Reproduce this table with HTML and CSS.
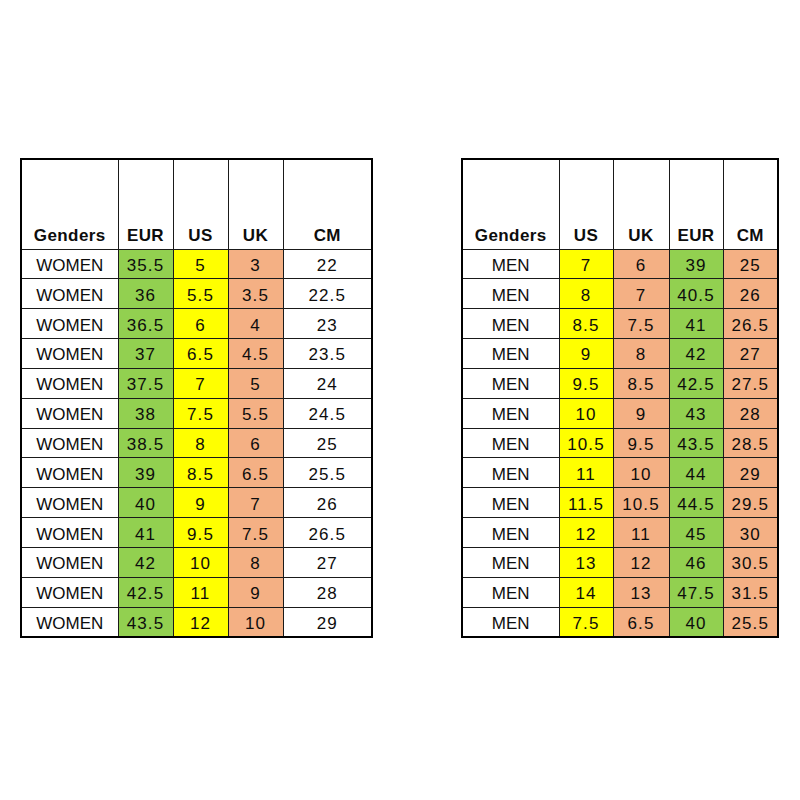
FILE: index.html
```html
<!DOCTYPE html>
<html>
<head>
<meta charset="utf-8">
<link rel="stylesheet" href="styles.css">
</head>
<body>
<div class="page">
  <table class="chart chart-women">
    <colgroup><col class="c-gender"><col class="c-eur"><col class="c-us"><col class="c-uk"><col class="c-cm"></colgroup>
    <thead>
      <tr><th>Genders</th><th>EUR</th><th>US</th><th>UK</th><th>CM</th></tr>
    </thead>
    <tbody>
      <tr><td>WOMEN</td><td class="g num">35.5</td><td class="y num">5</td><td class="o num">3</td><td class="num">22</td></tr>
      <tr><td>WOMEN</td><td class="g num">36</td><td class="y num">5.5</td><td class="o num">3.5</td><td class="num">22.5</td></tr>
      <tr><td>WOMEN</td><td class="g num">36.5</td><td class="y num">6</td><td class="o num">4</td><td class="num">23</td></tr>
      <tr><td>WOMEN</td><td class="g num">37</td><td class="y num">6.5</td><td class="o num">4.5</td><td class="num">23.5</td></tr>
      <tr><td>WOMEN</td><td class="g num">37.5</td><td class="y num">7</td><td class="o num">5</td><td class="num">24</td></tr>
      <tr><td>WOMEN</td><td class="g num">38</td><td class="y num">7.5</td><td class="o num">5.5</td><td class="num">24.5</td></tr>
      <tr><td>WOMEN</td><td class="g num">38.5</td><td class="y num">8</td><td class="o num">6</td><td class="num">25</td></tr>
      <tr><td>WOMEN</td><td class="g num">39</td><td class="y num">8.5</td><td class="o num">6.5</td><td class="num">25.5</td></tr>
      <tr><td>WOMEN</td><td class="g num">40</td><td class="y num">9</td><td class="o num">7</td><td class="num">26</td></tr>
      <tr><td>WOMEN</td><td class="g num">41</td><td class="y num">9.5</td><td class="o num">7.5</td><td class="num">26.5</td></tr>
      <tr><td>WOMEN</td><td class="g num">42</td><td class="y num">10</td><td class="o num">8</td><td class="num">27</td></tr>
      <tr><td>WOMEN</td><td class="g num">42.5</td><td class="y num">11</td><td class="o num">9</td><td class="num">28</td></tr>
      <tr><td>WOMEN</td><td class="g num">43.5</td><td class="y num">12</td><td class="o num">10</td><td class="num">29</td></tr>
    </tbody>
  </table>

  <table class="chart chart-men">
    <colgroup><col class="c-gender"><col class="c-us2"><col class="c-uk2"><col class="c-eur2"><col class="c-cm2"></colgroup>
    <thead>
      <tr><th>Genders</th><th>US</th><th>UK</th><th>EUR</th><th>CM</th></tr>
    </thead>
    <tbody>
      <tr><td>MEN</td><td class="y num">7</td><td class="o num">6</td><td class="g num">39</td><td class="o num">25</td></tr>
      <tr><td>MEN</td><td class="y num">8</td><td class="o num">7</td><td class="g num">40.5</td><td class="o num">26</td></tr>
      <tr><td>MEN</td><td class="y num">8.5</td><td class="o num">7.5</td><td class="g num">41</td><td class="o num">26.5</td></tr>
      <tr><td>MEN</td><td class="y num">9</td><td class="o num">8</td><td class="g num">42</td><td class="o num">27</td></tr>
      <tr><td>MEN</td><td class="y num">9.5</td><td class="o num">8.5</td><td class="g num">42.5</td><td class="o num">27.5</td></tr>
      <tr><td>MEN</td><td class="y num">10</td><td class="o num">9</td><td class="g num">43</td><td class="o num">28</td></tr>
      <tr><td>MEN</td><td class="y num">10.5</td><td class="o num">9.5</td><td class="g num">43.5</td><td class="o num">28.5</td></tr>
      <tr><td>MEN</td><td class="y num">11</td><td class="o num">10</td><td class="g num">44</td><td class="o num">29</td></tr>
      <tr><td>MEN</td><td class="y num">11.5</td><td class="o num">10.5</td><td class="g num">44.5</td><td class="o num">29.5</td></tr>
      <tr><td>MEN</td><td class="y num">12</td><td class="o num">11</td><td class="g num">45</td><td class="o num">30</td></tr>
      <tr><td>MEN</td><td class="y num">13</td><td class="o num">12</td><td class="g num">46</td><td class="o num">30.5</td></tr>
      <tr><td>MEN</td><td class="y num">14</td><td class="o num">13</td><td class="g num">47.5</td><td class="o num">31.5</td></tr>
      <tr><td>MEN</td><td class="y num">7.5</td><td class="o num">6.5</td><td class="g num">40</td><td class="o num">25.5</td></tr>
    </tbody>
  </table>
</div>
</body>
</html>
```

FILE: styles.css
```css
html, body {
  margin: 0;
  padding: 0;
  background: #ffffff;
}

.page {
  display: flex;
  align-items: flex-start;
  gap: 88px;
  padding: 158px 0 0 20px;
  font-family: "Liberation Sans", Arial, sans-serif;
  color: #0d0d0d;
}

.chart {
  border-collapse: collapse;
  table-layout: fixed;
  border: 2px solid #000;
}

.chart-women { width: 351px; }
.chart-men { width: 316px; }

.c-gender { width: 97px; }
.c-eur, .c-us, .c-uk { width: 55px; }
.c-cm { width: 89px; }
.c-us2 { width: 54px; }
.c-uk2 { width: 56px; }
.c-eur2 { width: 54px; }
.c-cm2 { width: 55px; }

.chart th,
.chart td {
  border: 1px solid #1a1a1a;
  padding: 0;
  text-align: center;
  font-size: 17px;
  white-space: nowrap;
}

.chart thead tr { height: 90px; }

.chart th {
  vertical-align: bottom;
  font-weight: bold;
  padding-bottom: 3px;
  letter-spacing: 0.4px;
}

.chart tbody tr { height: 29.85px; }

.chart td {
  vertical-align: middle;
  padding-top: 4px;
}

.chart td.num { letter-spacing: 1.1px; }

.g { background: #92d050; }
.y { background: #ffff00; }
.o { background: #f4b084; }
```
